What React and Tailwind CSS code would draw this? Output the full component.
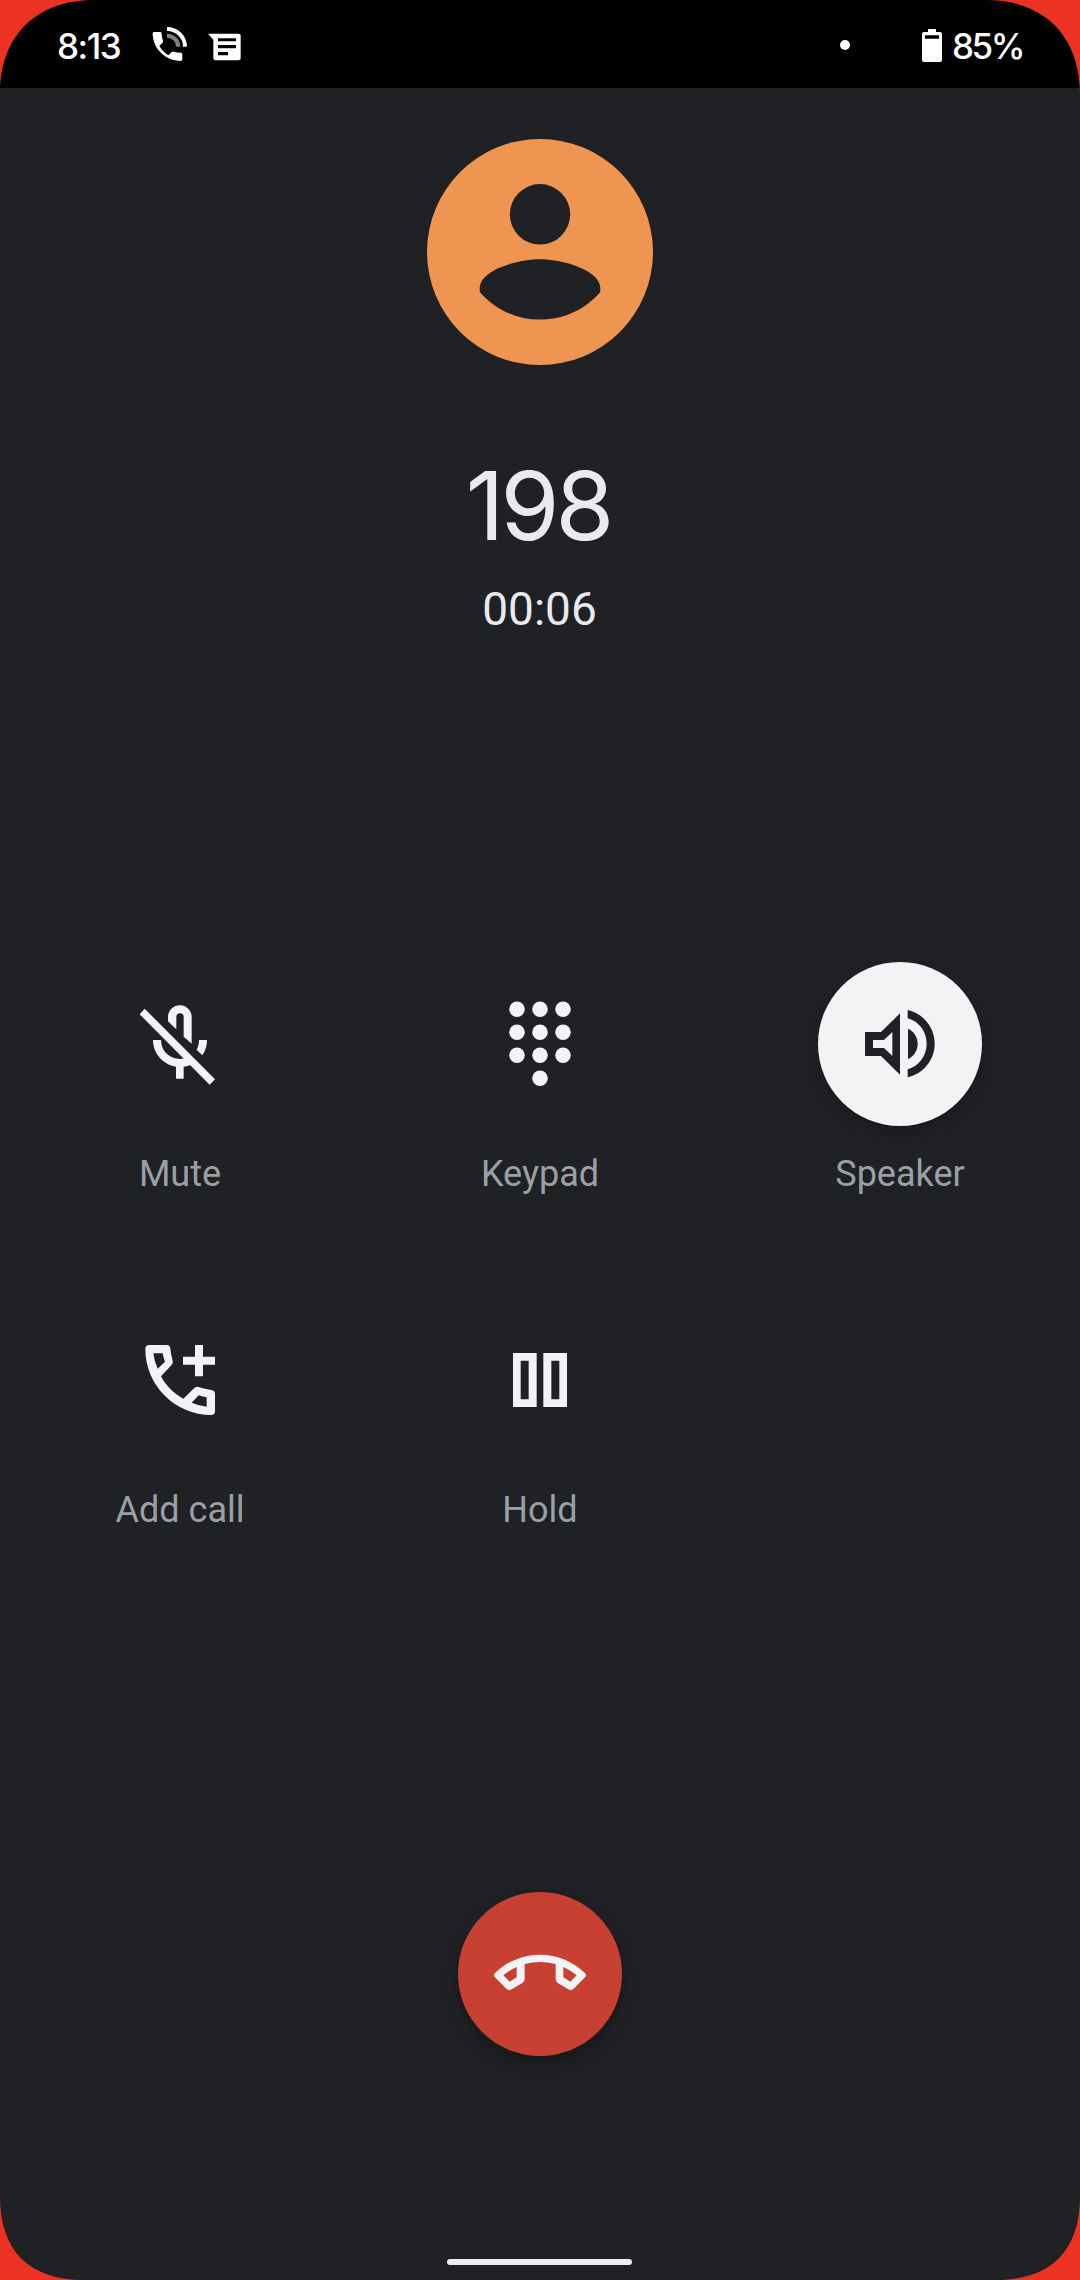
import React from "react";

function Corner({ className, size, d }) {
  return (
    <svg className={className} width={size} height={size} viewBox={`0 0 ${size} ${size}`} fill="#ec3323" aria-hidden="true">
      <path d={d} />
    </svg>
  );
}

const TOP_CORNER = "M0 0H94C36 0 0 36 0 94Z";
const BOTTOM_CORNER = "M0 0H84C29 0 0 29 0 84Z";

function StatusBar() {
  return (
    <header className="flex h-[88px] items-center bg-black pl-[57px] pr-[57px] font-['Inter'] text-[35px] font-medium leading-[88px] text-white">
      <span className="mt-[3px] w-[64px] whitespace-nowrap tracking-[-1.5px]">8:13</span>
      <svg className="ml-[31px] shrink-0" width="36" height="36" viewBox="456 78 108 108" fill="#fff">
        <path d="M463 96H481Q485 96 485 101Q485 112 489 122Q490 126 487 129L478 138Q489 157 506 166L514 157Q517 154 521 155Q531 158 543 158Q547 159 547 163V178Q547 183 542 183C496 183 458 146 458 100Q458 96 463 96Z" />
        <path d="M501 81A60 59 0 0 1 561 140H549A48 47 0 0 0 501 93Z" />
        <path fill="#808080" d="M501 101A40 39 0 0 1 541 140H528A27 26 0 0 0 501 113Z" />
      </svg>
      <svg className="ml-[20px] mt-[5px] shrink-0" width="34" height="28" viewBox="624 97 102 84" fill="#fff">
        <path fillRule="evenodd" d="M624 99H716Q722 99 722 105V173Q722 179 716 179H646Q640 179 640 173V117ZM654 113V122H708V113ZM654 133V143H708V133ZM654 154V164H684V154Z" />
      </svg>
      <span className="ml-auto mt-[2px] size-[10px] rounded-full bg-white" />
      <svg className="ml-[72px] mt-[3px] shrink-0" width="20" height="33" viewBox="336 87 60 99" fill="#fff">
        <path fillRule="evenodd" d="M354 87H378V96H390Q396 96 396 102V180Q396 186 390 186H342Q336 186 336 180V102Q336 96 342 96H354ZM345 106V116H387V106Z" />
      </svg>
      <span className="ml-[10px] mt-[3px] w-[71px] whitespace-nowrap tracking-[-2.5px]">85%</span>
    </header>
  );
}

function Avatar() {
  return (
    <svg className="block" width="226" height="226" viewBox="0 0 226 226">
      <circle cx="113" cy="113" r="113" fill="#ed9551" />
      <circle cx="113" cy="75.3" r="30.2" fill="#202124" />
      <path fill="#202124" d="M52.7 153V149C53.5 130 93 120.3 113 120.3C133 120.3 172.5 130 173.3 149V153C158 170.5 137 180.5 113 180.5C89 180.5 68 170.5 52.7 153Z" />
    </svg>
  );
}

function MuteIcon() {
  return (
    <svg width="92" height="92" viewBox="102 114 276 276" fill="currentColor">
      <path d="M119 163L134 146L345 358L329 374Z" />
      <path d="M204 184V171A35.5 35.5 0 0 1 275 171V251L251 230V171A11 11 0 0 0 229 171V208Z" />
      <path d="M297 240H321C321 258 316 273 307 286L290 269C295 260 297 250 297 240Z" />
      <path d="M159 240H183C183 272 208 297 240 297Q247 297 253 295L273 314Q263 319 251 320V356H228V320C190 314 159 281 159 240Z" />
    </svg>
  );
}

const DOTS = [
  [201, 148], [270, 148], [339, 148],
  [201, 217], [270, 217], [339, 217],
  [201, 286], [270, 286], [339, 286],
  [270, 355],
];

function KeypadIcon() {
  return (
    <svg width="92" height="92" viewBox="132 114 276 276" fill="currentColor">
      {DOTS.map(([x, y]) => (
        <circle key={`${x}-${y}`} cx={x} cy={y} r="23.3" />
      ))}
    </svg>
  );
}

function SpeakerIcon() {
  return (
    <svg width="92" height="92" viewBox="162 174 276 276" fill="currentColor">
      <path fillRule="evenodd" d="M195 276H243L300 220V404L243 348H195ZM219 300V324H252L277 348V276L252 300Z" />
      <path d="M324 266C341 273 353 291 353 311.500S341 350 324 357Z" />
      <path d="M323 210C370 221 404 262 404 311S370 401 323 412V388C357 378 380 347 380 311S357 244 323 235Z" />
    </svg>
  );
}

function AddCallIcon() {
  return (
    <svg width="92" height="92" viewBox="102 72 276 276" fill="currentColor">
      <path fillRule="evenodd" d="M148 105H200Q209 105 211 114Q212 134 218 152Q220 160 214 166L183 199C198 227 221 251 250 266L282 235Q288 229 296 231Q315 237 334 240Q345 242 345 252V303Q345 315 334 315C225 315 136 226 136 117Q136 105 148 105ZM160 130Q163 155 173 176L195 155Q190 143 188 130ZM296 256L275 278Q296 287 320 290V262Q308 260 296 256Z" />
      <path d="M285 105H309V140H345V164H309V199H285V164H249V140H285Z" />
    </svg>
  );
}

function HoldIcon() {
  return (
    <svg width="92" height="92" viewBox="132 72 276 276" fill="currentColor">
      <path fillRule="evenodd" d="M189 129H260V291H189ZM212 152V268H236V152ZM280 129H351V291H280ZM304 152V268H328V152Z" />
    </svg>
  );
}

function EndCallIcon() {
  return (
    <svg width="92" height="92" viewBox="162 174 276 276" fill="currentColor">
      <path fillRule="evenodd" d="M165 309C202 274 248 254 300 254S398 274 435 309Q441 316 435 322L401 356Q393 363 385 358L353 339Q347 335 347 328V282Q323 276 300 276T254 282V328Q254 335 247 339L215 358Q207 363 199 356L165 322Q159 316 165 309ZM190 316L209 335L230 322V291Q208 301 190 316ZM410 316Q392 301 370 291V322L391 335Z" />
    </svg>
  );
}

const ACTIONS = [
  { label: "Mute", Icon: MuteIcon },
  { label: "Keypad", Icon: KeypadIcon },
  { label: "Speaker", Icon: SpeakerIcon, active: true },
  { label: "Add call", Icon: AddCallIcon },
  { label: "Hold", Icon: HoldIcon },
];

function Action({ label, Icon, active }) {
  return (
    <button type="button" className="flex h-[336px] flex-col items-center">
      <span
        className={
          active
            ? "flex size-[164px] items-center justify-center rounded-full bg-[#f1f3f4] text-[#202124] shadow-[0_7px_14px_rgba(0,0,0,0.22)]"
            : "flex size-[164px] items-center justify-center rounded-full text-[#f1f3f4]"
        }
      >
        <Icon />
      </span>
      <span className="mt-[26px] text-[36px] leading-[44px] text-[#9aa0a3]">{label}</span>
    </button>
  );
}

export default function App() {
  return (
    <div className="relative flex h-[2280px] w-[1080px] flex-col overflow-hidden bg-[#202124] font-['Roboto',sans-serif]">
      <StatusBar />
      <main className="flex flex-1 flex-col items-center pt-[51px]">
        <Avatar />
        <h1 className="mt-[81px] pr-[4px] font-['Inter'] text-[95px] font-normal leading-[120px] tracking-[-4px] text-[#e8eaed]">198</h1>
        <p className="mt-[13px] pr-px text-[46px] leading-[60px] text-[#e8eaed]">00:06</p>
        <div className="mt-[323px] grid w-full grid-cols-3">
          {ACTIONS.map((a) => (
            <Action key={a.label} {...a} />
          ))}
        </div>
        <button
          type="button"
          aria-label="End call"
          className="mt-[258px] flex size-[164px] items-center justify-center rounded-full bg-[#c84031] text-[#f1f3f4] shadow-[0_8px_16px_rgba(0,0,0,0.28)]"
        >
          <EndCallIcon />
        </button>
        <div className="mb-[15px] mr-px mt-auto h-[6px] w-[185px] rounded-full bg-[#ededed]" />
      </main>
      <Corner className="absolute left-0 top-0" size={94} d={TOP_CORNER} />
      <Corner className="absolute right-0 top-0 -scale-x-100" size={94} d={TOP_CORNER} />
      <Corner className="absolute bottom-0 left-0 -scale-y-100" size={84} d={BOTTOM_CORNER} />
      <Corner className="absolute bottom-0 right-0 rotate-180" size={84} d={BOTTOM_CORNER} />
    </div>
  );
}
